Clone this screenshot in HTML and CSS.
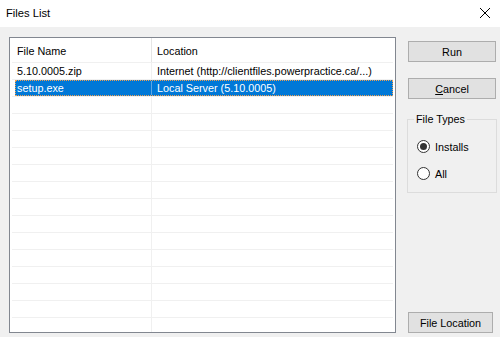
FILE: index.html
```html
<!DOCTYPE html>
<html>
<head>
<meta charset="utf-8">
<link rel="stylesheet" href="styles.css">
</head>
<body>
<div class="dialog">
  <div class="titlebar">
    <span class="title">Files List</span>
    <svg class="close" width="12" height="12" viewBox="0 0 12 12"><path d="M1 1 L11 11 M11 1 L1 11" stroke="#000" stroke-width="1" fill="none"/></svg>
  </div>
  <div class="content">
    <div class="listview">
      <div class="header">
        <div class="hcell c1">File Name</div>
        <div class="hcell c2">Location</div>
      </div>
      <div class="rows">
        <div class="row"><div class="cell c1">5.10.0005.zip</div><div class="cell c2">Internet (http://clientfiles.powerpractice.ca/...)</div></div>
        <div class="row selected"><div class="sel"><div class="cell c1">setup.exe</div><div class="cell c2">Local Server (5.10.0005)</div></div></div>
        <div class="row"><div class="cell c1"></div><div class="cell c2"></div></div>
        <div class="row"><div class="cell c1"></div><div class="cell c2"></div></div>
        <div class="row"><div class="cell c1"></div><div class="cell c2"></div></div>
        <div class="row"><div class="cell c1"></div><div class="cell c2"></div></div>
        <div class="row"><div class="cell c1"></div><div class="cell c2"></div></div>
        <div class="row"><div class="cell c1"></div><div class="cell c2"></div></div>
        <div class="row"><div class="cell c1"></div><div class="cell c2"></div></div>
        <div class="row"><div class="cell c1"></div><div class="cell c2"></div></div>
        <div class="row"><div class="cell c1"></div><div class="cell c2"></div></div>
        <div class="row"><div class="cell c1"></div><div class="cell c2"></div></div>
        <div class="row"><div class="cell c1"></div><div class="cell c2"></div></div>
        <div class="row"><div class="cell c1"></div><div class="cell c2"></div></div>
        <div class="row"><div class="cell c1"></div><div class="cell c2"></div></div>
        <div class="row"><div class="cell c1"></div><div class="cell c2"></div></div>
      </div>
    </div>
    <div class="side">
      <div class="btn">Run</div>
      <div class="btn cancel"><span class="u">C</span>ancel</div>
      <fieldset class="group">
        <legend>File Types</legend>
        <div class="radio-row"><span class="radio checked"></span><span>Installs</span></div>
        <div class="radio-row"><span class="radio"></span><span>All</span></div>
      </fieldset>
      <div class="btn fileloc">File Location</div>
    </div>
  </div>
</div>
</body>
</html>
```

FILE: styles.css
```css
* { box-sizing: border-box; }
html, body { margin: 0; padding: 0; }
body {
  width: 500px;
  height: 337px;
  overflow: hidden;
  font-family: "Liberation Sans", Arial, sans-serif;
  font-size: 10.8px;
  color: #000;
  background: #f0f0f0;
}
.dialog { width: 500px; height: 337px; display: flex; flex-direction: column; }
.titlebar {
  height: 27px;
  background: #fff;
  display: flex;
  align-items: center;
  justify-content: space-between;
  padding: 0 9px 0 6px;
}
.title { font-size: 11.2px; margin-top: -2px; }
.close { display: block; margin-top: -2px; }
.content { flex: 1; display: flex; padding: 10px 0 4px 9px; }
.listview {
  width: 387px;
  height: 296px;
  border: 1px solid #828790;
  background: #fff;
  overflow: hidden;
}
.header { display: flex; height: 24px; }
.hcell { display: flex; align-items: center; padding-top: 1px; }
.header .c1 { width: 141px; padding-left: 7px; }
.header .c2 { flex: 1; padding-left: 5px; border-left: 1px solid #e5e5e5; }
.rows { margin: 0 2px 0 2px; }
.row { height: 17px; border-top: 1px solid #f0f0f0; display: flex; }
.cell { display: flex; align-items: center; height: 16px; white-space: nowrap; }
.row .c1 { width: 139px; padding-left: 5px; }
.row .c2 { flex: 1; padding-left: 5px; border-left: 1px solid #f0f0f0; }
.selected .sel {
  display: flex;
  flex: 1;
  margin-left: 3px;
  background: #0078d7;
  color: #fff;
  border: 1px dotted #f0a050;
}
.selected .sel .c1 { width: 135px; padding-left: 1px; height: 14px; }
.selected .sel .c2 { border-left: 1px solid #5fa5e3; height: 14px; }
.side {
  width: 90px;
  margin-left: 11px;
  padding-top: 4px;
  display: flex;
  flex-direction: column;
}
.btn {
  width: 88px;
  height: 21px;
  margin-left: 1px;
  background: #e1e1e1;
  border: 1px solid #adadad;
  display: flex;
  align-items: center;
  justify-content: center;
}
.cancel { margin-top: 16px; }
.u { text-decoration: underline; }
.group {
  margin: 14px 0 0 0;
  padding: 4px 0 0 9px;
  height: 80px;
  border: 1px solid #dcdcdc;
  min-width: 0;
}
.group legend { padding: 0 2px; margin-left: -3px; }
.radio-row { display: flex; align-items: center; height: 13px; gap: 5px; margin-top: 11px; }
.radio-row + .radio-row { margin-top: 14px; }
.radio {
  width: 13px;
  height: 13px;
  border: 1px solid #333;
  border-radius: 50%;
  background: #fff;
  display: flex;
  align-items: center;
  justify-content: center;
}
.radio.checked::after {
  content: "";
  width: 7px;
  height: 7px;
  border-radius: 50%;
  background: #333;
}
.fileloc { margin-top: auto; width: 85px; }
```
